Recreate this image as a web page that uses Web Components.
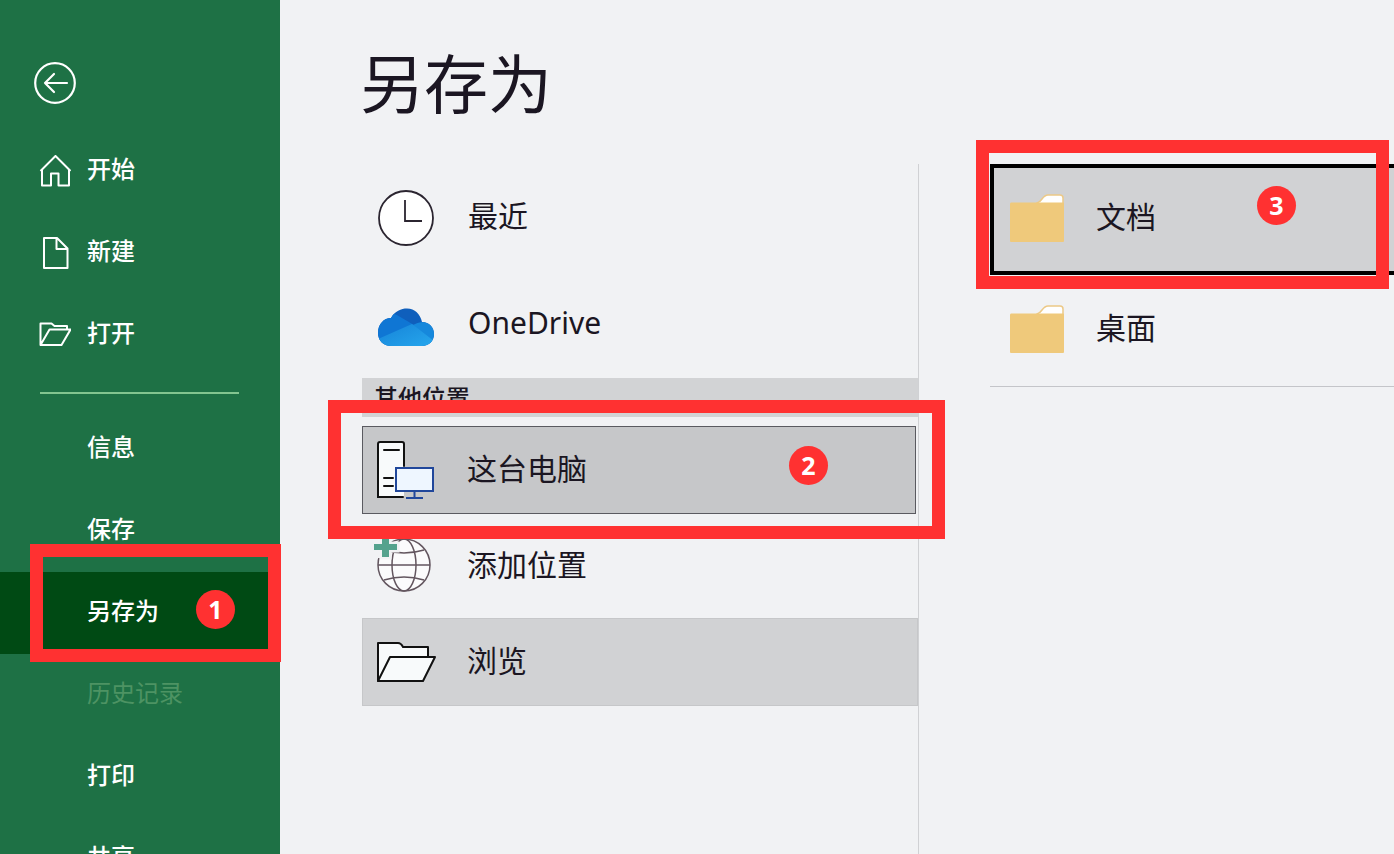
<!DOCTYPE html>
<html lang="zh-CN">
<head>
<meta charset="utf-8">
<meta name="viewport" content="width=device-width, initial-scale=1">
<title>另存为</title>
<style>
  body {
    margin: 0;
    height: 100vh;
    overflow: hidden;
    background-color: #f1f2f4;
    color: #1b1622;
    font-family: "Noto Sans", "Noto Sans CJK SC", sans-serif;
    --accent: #1e7145;
    --accent-dark: #004a14;
    --callout: #ff3131;
  }
</style>
</head>
<body>
<backstage-view>
  <backstage-nav slot="nav">
    <nav-item>
      <svg slot="icon" viewBox="0 0 32 32" width="32" height="32" fill="none" stroke="currentColor" stroke-width="2" stroke-linejoin="round">
        <path d="M1.500 16L16.500 1l15 15M3 14.500v16h9V18.500h7.500v12h10.500v-16" />
      </svg>
      开始
    </nav-item>
    <nav-item>
      <svg slot="icon" viewBox="0 0 32 32" width="32" height="32" fill="none" stroke="currentColor" stroke-width="2" stroke-linejoin="round">
        <path d="M5 1h13l10.500 10.500V31H5zM17.500 1v11h11" />
      </svg>
      新建
    </nav-item>
    <nav-item>
      <svg slot="icon" viewBox="0 0 32 32" width="32" height="32" fill="none" stroke="currentColor" stroke-width="2" stroke-linejoin="round">
        <path d="M1.500 26V4.500h11l3 2.500H28v4M1.500 26L10.500 10.500h21L22.500 26z" />
      </svg>
      打开
    </nav-item>
    <hr slot="divider">
    <nav-item slot="more">信息</nav-item>
    <nav-item slot="more">保存</nav-item>
    <nav-item slot="more" selected>另存为
      <step-callout slot="callout" step="1" style="--inset: -28px -1px -8px 30px; --badge-right: 33px"></step-callout>
    </nav-item>
    <nav-item slot="more" disabled>历史记录</nav-item>
    <nav-item slot="more">打印</nav-item>
    <nav-item slot="more">共享</nav-item>
  </backstage-nav>

  <span slot="title">另存为</span>

  <place-list slot="places">
    <place-item size="large">
      <svg slot="icon" viewBox="0 0 58 58" width="58" height="58">
        <circle cx="28" cy="29" r="27" fill="#fff" stroke="#2b2530" stroke-width="1.800" />
        <path d="M27 11v21h17" fill="none" stroke="#2b2530" stroke-width="1.800" />
      </svg>
      最近
    </place-item>
    <place-item size="large">
      <svg slot="icon" viewBox="0 0 58 58" width="58" height="58">
        <defs>
          <clipPath id="cloud">
            <path d="M13 50C5 50 0 44 0 37C0 28 6 22 13 22C17 15 23 12.500 29 12.500C37 12.500 42 18 44 26C51 26 56 31 56 38C56 45 51 50 44 50z" />
          </clipPath>
          <linearGradient id="front" x1="0" y1="0" x2="1" y2="1">
            <stop offset="0" stop-color="#1683d8" />
            <stop offset="1" stop-color="#27a9ee" />
          </linearGradient>
        </defs>
        <g clip-path="url(#cloud)">
          <path d="M0 8h58v44H0z" fill="#0f5fbc" />
          <path d="M0 17h14q6 2 10 5l12 7-30 16H0z" fill="#0f76d4" />
          <path d="M34 30q5-4 12-4h12v24L44 42z" fill="#1688dc" />
          <path d="M0 43l34-15 22 17v8H0z" fill="url(#front)" />
        </g>
      </svg>
      OneDrive
    </place-item>
    <place-heading>其他位置</place-heading>
    <place-group>
      <place-item selected>
        <svg slot="icon" viewBox="0 0 58 58" width="58" height="58" fill="#f8fafb" stroke="#111" stroke-width="2">
          <path d="M27 56H1V3q0-2 2-2h22q2 0 2 2v23" stroke="none" />
          <path d="M26 56H1V3q0-2 2-2h22q2 0 2 2v22M7 9h15M7 37h9M7 45h9" fill="none" stroke-linecap="round" />
          <path d="M19 27h37v23H19zM37.500 50v7M29 57h17" fill="#eef6ff" stroke="#20479b" />
        </svg>
        这台电脑
        <step-callout slot="callout" step="2" style="--inset: -26px -27px -25px -34px; --badge-right: 104px"></step-callout>
      </place-item>
      <place-item>
        <svg slot="icon" viewBox="0 0 58 58" width="58" height="58">
          <g fill="none" stroke="#63565f" stroke-width="1.500">
            <circle cx="27" cy="28" r="26" fill="#fbfbfc" />
            <ellipse cx="27" cy="28" rx="12" ry="26" />
            <path d="M1 28h52M7 13q20 6 40 0M7 43q20-6 40 0" />
          </g>
          <path d="M-4 3H10v18H-4z" fill="#f1f2f4" />
          <path d="M5 1h7v6h8v6h-8v7H5v-7h-8V7h8z" fill="#54a28d" stroke="#f1f2f4" stroke-width="5" paint-order="stroke" />
        </svg>
        添加位置
      </place-item>
      <place-item hover>
        <svg slot="icon" viewBox="0 0 58 58" width="58" height="58" fill="#f8fafb" stroke="#111" stroke-width="2" stroke-linejoin="round">
          <path d="M1 48V10h20q3 0 5 4h25v11H40L6 48z" />
          <path d="M1 48l12-24h45L46 48z" />
        </svg>
        浏览
      </place-item>
    </place-group>
  </place-list>

  <folder-list slot="folders">
    <folder-item selected>文档
      <step-callout slot="callout" step="3" style="--inset: -24px 5px -14px -14px; --badge-right: 80px"></step-callout>
    </folder-item>
    <folder-item>桌面</folder-item>
  </folder-list>
</backstage-view>

<script>
  function defineElement(name, html) {
    const template = document.createElement("template");
    template.innerHTML = html;
    customElements.define(name, class extends HTMLElement {
      constructor() {
        super();
        this.attachShadow({ mode: "open" });
        this.shadowRoot.appendChild(template.content.cloneNode(true));
      }
      connectedCallback() {
        const button = this.shadowRoot.querySelector("button");
        if (button && this.hasAttribute("disabled")) {
          button.disabled = true;
        }
        const badge = this.shadowRoot.querySelector(".badge");
        if (badge) {
          badge.textContent = this.getAttribute("step");
        }
      }
    });
  }

  /* PAGE */
  defineElement("backstage-view", `
    <style>
      :host {
        display: flex;
        height: 100%;
      }
      main {
        flex: 1;
        display: flex;
        flex-direction: column;
        box-sizing: border-box;
        min-width: 0;
        padding: 46px 0 0 80px;
      }
      h1 {
        margin: 0 0 42px;
        font-size: 64px;
        line-height: 76px;
        font-weight: 400;
      }
      .columns {
        flex: 1;
        display: grid;
        grid-template-columns: minmax(0, 557px) minmax(0, 1fr);
        column-gap: 71px;
        padding-left: 2px;
      }
    </style>
    <slot name="nav"></slot>
    <main>
      <h1><slot name="title"></slot></h1>
      <div class="columns">
        <slot name="places"></slot>
        <slot name="folders"></slot>
      </div>
    </main>
  `);

  /* SIDEBAR */
  defineElement("backstage-nav", `
    <style>
      :host {
        display: block;
        flex: 0 0 280px;
        position: relative;
        z-index: 1;
        background-color: var(--accent);
        color: #fff;
      }
      nav {
        display: flex;
        flex-direction: column;
        padding-top: 62px;
      }
      .back {
        width: 42px;
        height: 42px;
        margin: 0 0 26px 34px;
        padding: 0;
        border: none;
        background: none;
        color: inherit;
        cursor: pointer;
      }
      .back svg {
        display: block;
      }
      ::slotted(hr) {
        width: 199px;
        height: 2px;
        margin: 16px 0 14px 40px;
        border: none;
        background-color: #83c590;
      }
    </style>
    <nav>
      <button class="back" type="button" aria-label="返回">
        <svg viewBox="0 0 42 42" width="42" height="42" fill="none" stroke="currentColor" stroke-width="2.200" stroke-linecap="round" stroke-linejoin="round">
          <circle cx="21" cy="21" r="19.800" />
          <path d="M33 21H11M20 12l-9 9 9 9" />
        </svg>
      </button>
      <slot></slot>
      <slot name="divider"></slot>
      <slot name="more"></slot>
    </nav>
  `);

  defineElement("nav-item", `
    <style>
      :host {
        display: block;
        position: relative;
      }
      button {
        display: grid;
        grid-template-columns: 32px 1fr;
        column-gap: 16px;
        align-items: center;
        width: 100%;
        height: 82px;
        padding: 0 0 0 39px;
        border: none;
        background: none;
        color: inherit;
        font-family: inherit;
        font-size: 24px;
        font-weight: 500;
        line-height: 32px;
        text-align: left;
        cursor: pointer;
      }
      .label {
        grid-column: 2;
        padding-bottom: 4px;
      }
      ::slotted(svg) {
        display: block;
      }
      :host([selected]) button {
        background-color: var(--accent-dark);
      }
      :host([disabled]) button {
        color: #4d9363;
        font-weight: 400;
      }
    </style>
    <button type="button"><slot name="icon"></slot><span class="label"><slot></slot></span></button>
    <slot name="callout"></slot>
  `);

  /* PLACES */
  defineElement("place-list", `
    <style>
      :host {
        display: block;
        border-right: 1px solid #d0d1d4;
      }
    </style>
    <slot></slot>
  `);

  defineElement("place-heading", `
    <style>
      :host {
        display: block;
      }
      h2 {
        margin: 0;
        padding: 0 12px;
        background-color: #d2d3d5;
        font-size: 24px;
        font-weight: 500;
        line-height: 39px;
      }
    </style>
    <h2><slot></slot></h2>
  `);

  defineElement("place-group", `
    <style>
      :host {
        display: grid;
        gap: 8px;
        padding-top: 9px;
      }
    </style>
    <slot></slot>
  `);

  defineElement("place-item", `
    <style>
      :host {
        display: block;
        position: relative;
      }
      button {
        display: flex;
        align-items: center;
        gap: 32px;
        box-sizing: border-box;
        width: 100%;
        height: 88px;
        padding: 0 15px 0 14px;
        border: 1px solid transparent;
        background: none;
        color: inherit;
        font-family: inherit;
        font-size: 30px;
        line-height: 40px;
        text-align: left;
        cursor: pointer;
      }
      .label {
        padding-bottom: 2px;
      }
      ::slotted(svg) {
        display: block;
        flex: none;
        overflow: visible;
      }
      :host([size="large"]) button {
        height: 107px;
        padding-left: 15px;
      }
      :host([size="large"]) .label {
        padding-bottom: 4px;
      }
      :host([hover]) button {
        background-color: #d1d2d4;
        border-color: #c6c7c9;
      }
      :host([selected]) {
        padding-right: 2px;
      }
      :host([selected]) button {
        background-color: #c6c7c9;
        border-color: #5a5a60;
      }
    </style>
    <button type="button"><slot name="icon"></slot><span class="label"><slot></slot></span></button>
    <slot name="callout"></slot>
  `);

  /* FOLDERS */
  defineElement("folder-list", `
    <style>
      :host {
        display: block;
      }
      div {
        border-bottom: 1px solid #c4c5c9;
      }
    </style>
    <div><slot></slot></div>
  `);

  defineElement("folder-item", `
    <style>
      :host {
        display: block;
        position: relative;
      }
      button {
        display: flex;
        align-items: center;
        gap: 32px;
        box-sizing: border-box;
        width: 100%;
        height: 111px;
        padding: 0 15px;
        border: 4px solid transparent;
        border-right: none;
        background: none;
        color: inherit;
        font-family: inherit;
        font-size: 30px;
        line-height: 40px;
        text-align: left;
        cursor: pointer;
      }
      .label {
        padding-bottom: 6px;
      }
      svg {
        display: block;
        flex: none;
        padding-bottom: 2px;
      }
      :host([selected]) button {
        background-color: #d1d2d4;
        border-color: #000;
      }
    </style>
    <button type="button">
      <svg viewBox="0 0 55 50" width="55" height="50">
        <path d="M28 9q3-1 5-4 3-4 6-4h12q3 0 3 3v8H28z" fill="#fff" stroke="#ecc987" stroke-width="1.500" />
        <path d="M2 8.500h52q1 0 1 1V47q0 1-1 1H2q-1 0-1-1V10q0-1.500 1-1.500z" fill="#efc97b" />
      </svg>
      <span class="label"><slot></slot></span>
    </button>
    <slot name="callout"></slot>
  `);

  /* NUMBERED STEPS drawn over the menu */
  defineElement("step-callout", `
    <style>
      :host {
        position: absolute;
        inset: var(--inset);
        z-index: 2;
        border: 13px solid var(--callout);
        pointer-events: none;
      }
      .badge {
        position: absolute;
        top: 33px;
        right: var(--badge-right);
        width: 39px;
        height: 39px;
        border-radius: 50%;
        background-color: var(--callout);
        color: #fff;
        font-family: "Open Sans", sans-serif;
        font-size: 25px;
        font-weight: 700;
        line-height: 38px;
        text-align: center;
      }
    </style>
    <span class="badge"></span>
  `);
</script>
</body>
</html>
